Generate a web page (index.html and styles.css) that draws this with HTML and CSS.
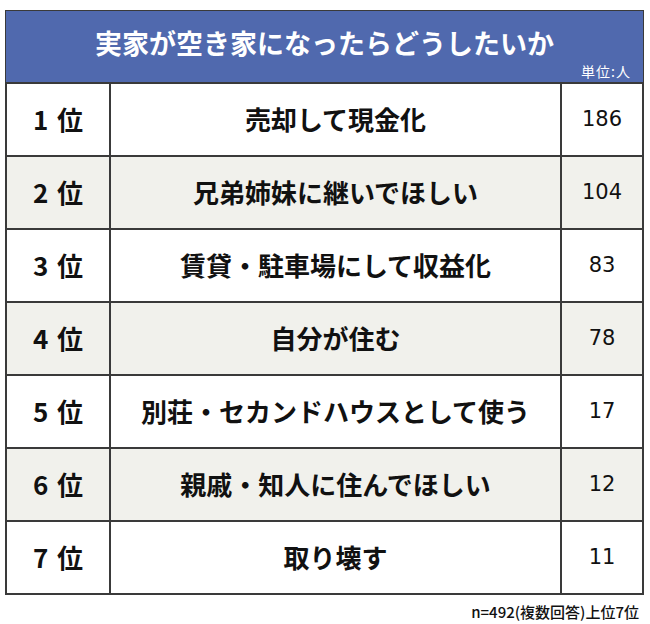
FILE: index.html
```html
<!DOCTYPE html>
<html lang="ja">
<head>
<meta charset="utf-8">
<link rel="stylesheet" href="styles.css">
</head>
<body>
<div class="wrap">
  <div class="header">
    <div class="title">実家が空き家になったらどうしたいか</div>
    <div class="unit">単位:人</div>
  </div>
  <div class="table">
    <div class="row"><div class="rank">1 位</div><div class="item">売却して現金化</div><div class="num">186</div></div>
    <div class="row alt"><div class="rank">2 位</div><div class="item">兄弟姉妹に継いでほしい</div><div class="num">104</div></div>
    <div class="row"><div class="rank">3 位</div><div class="item">賃貸・駐車場にして収益化</div><div class="num">83</div></div>
    <div class="row alt"><div class="rank">4 位</div><div class="item">自分が住む</div><div class="num">78</div></div>
    <div class="row"><div class="rank">5 位</div><div class="item">別荘・セカンドハウスとして使う</div><div class="num">17</div></div>
    <div class="row alt"><div class="rank">6 位</div><div class="item">親戚・知人に住んでほしい</div><div class="num">12</div></div>
    <div class="row"><div class="rank">7 位</div><div class="item">取り壊す</div><div class="num">11</div></div>
  </div>
  <div class="note">n=492(複数回答)上位7位</div>
</div>
</body>
</html>
```
FILE: styles.css
```css
* { box-sizing: border-box; }
body {
  margin: 0;
  background: #ffffff;
  font-family: "Noto Sans CJK JP", "Noto Sans", sans-serif;
  color: #111;
}
.wrap {
  padding: 10px 6px 0 5px;
  width: 650px;
}
.header {
  width: 639px;
  height: 74px;
  background: #5069ae;
  border: 1px solid #3a3a3a;
  border-bottom: 2px solid #3a3a3a;
  display: flex;
  flex-direction: column;
  color: #fff;
}
.title {
  font-weight: 700;
  font-size: 27px;
  line-height: 32px;
  text-align: center;
  margin-top: 16px;
}
.unit {
  align-self: flex-end;
  font-size: 14px;
  line-height: 16px;
  letter-spacing: 1px;
  margin-top: 4px;
  margin-right: 12px;
}
.table {
  width: 639px;
  border-left: 2px solid #3a3a3a;
  border-right: 2px solid #3a3a3a;
}
.row {
  display: flex;
  height: 73px;
  border-bottom: 2px solid #3a3a3a;
  background: #ffffff;
}
.row.alt { background: #f1f1ec; }
.rank {
  width: 104px;
  border-right: 2px solid #3a3a3a;
  display: flex;
  align-items: center;
  justify-content: center;
  font-weight: 700;
  font-size: 26px;
  word-spacing: 3px;
  padding-bottom: 2px;
}
.item {
  flex: 1;
  border-right: 2px solid #3a3a3a;
  display: flex;
  align-items: center;
  justify-content: center;
  font-weight: 700;
  font-size: 26px;
  padding-bottom: 2px;
}
.num {
  width: 80px;
  display: flex;
  align-items: center;
  justify-content: center;
  font-family: "DejaVu Sans", Verdana, sans-serif;
  font-size: 21px;
  padding-bottom: 2px;
}
.note {
  width: 639px;
  text-align: right;
  font-size: 15px;
  font-weight: 500;
  line-height: 20px;
  margin-top: 7px;
  padding-right: 5px;
  color: #111;
}
```
